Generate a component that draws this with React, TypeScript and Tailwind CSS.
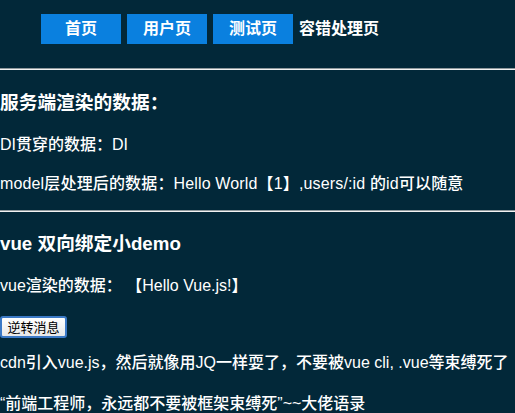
import { useState } from 'react';

const font = { fontFamily: '"Liberation Sans", "Noto Sans CJK SC", sans-serif' };

const navItems = ['首页', '用户页', '测试页'];

function Rule() {
  return <div className="h-[2px] border-t border-[#8f999e] border-b border-b-[#f2f2f2]" />;
}

export default function App() {
  const [msg, setMsg] = useState('Hello Vue.js!');

  return (
    <div className="min-h-[413px] w-[515px] bg-[#022839] text-white overflow-hidden" style={font}>
      {/* nav */}
      <div className="flex items-center gap-[6px] pl-[41px] pt-[14px] h-[44px]">
        {navItems.map((item) => (
          <a
            key={item}
            className="flex h-[30px] w-[80px] items-center justify-center bg-[#0a80df] text-[16px] font-semibold"
          >
            {item}
          </a>
        ))}
        <a className="text-[16px] font-semibold leading-[30px]">容错处理页</a>
      </div>

      <div className="mt-[24px]">
        <Rule />
      </div>

      <h3 className="mt-[22px] text-[18.72px] font-bold leading-[22px]">服务端渲染的数据：</h3>
      <p className="mt-[20px] text-[16px] font-medium leading-[22px]">DI贯穿的数据：DI</p>
      <p className="mt-[17px] text-[16px] font-medium leading-[22px] tracking-[0.15px]">
        model层处理后的数据：Hello World【1】,users/:id 的id可以随意
      </p>

      <div className="mt-[15px]">
        <Rule />
      </div>

      <h3 className="mt-[21px] text-[18.72px] font-bold leading-[22px]">vue 双向绑定小demo</h3>
      <p className="mt-[20px] text-[16px] font-medium leading-[22px]">vue渲染的数据：&nbsp;【{msg}】</p>
      <button
        onClick={() => setMsg(msg.split('').reverse().join(''))}
        className="mt-[19px] block h-[22px] w-[67px] rounded-[3px] border-2 border-[#3b79c6] bg-gradient-to-b from-white to-[#e8e8e8] text-[13px] leading-[15px] text-black"
      >
        逆转消息
      </button>
      <p className="mt-[14px] text-[16px] font-medium leading-[22px] whitespace-nowrap">
        cdn引入vue.js，然后就像用JQ一样耍了，不要被vue cli, .vue等束缚死了
      </p>
      <p className="mt-[19px] text-[16px] font-medium leading-[22px] whitespace-nowrap">
        “前端工程师，永远都不要被框架束缚死”~~大佬语录
      </p>
    </div>
  );
}
